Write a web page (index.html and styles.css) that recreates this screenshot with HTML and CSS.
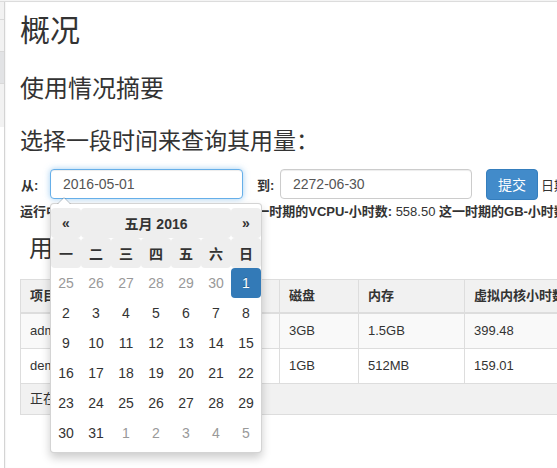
FILE: index.html
```html
<!DOCTYPE html>
<html lang="zh-CN">
<head>
<meta charset="utf-8">
<title>概况</title>
<link rel="stylesheet" href="styles.css">
</head>
<body>
<div class="topline"></div>
<div class="layout">
  <nav class="sidebar">
    <div class="side-item s1"></div>
    <div class="side-item s2"></div>
    <div class="side-item s3 active"></div>
    <div class="side-item s4"></div>
  </nav>
  <main class="main">
    <h1 class="page-title">概况</h1>
    <h3 class="summary-title">使用情况摘要</h3>
    <h3 class="select-title">选择一段时间来查询其用量：</h3>
    <form class="date-form">
      <label class="lbl lbl-from">从:</label>
      <input class="date-input focused" type="text" value="2016-05-01">
      <label class="lbl lbl-to">到:</label>
      <input class="date-input to-input" type="text" value="2272-06-30">
      <button class="btn-submit" type="button">提交</button>
      <span class="help">日期格式：YYYY-mm-dd</span>
    </form>
    <p class="usage-line"><strong>运行中的实例:</strong> 2 <strong>运行中的内存:</strong> 2.0GB <strong>这一时期的VCPU-小时数:</strong> 558.50 <strong>这一时期的GB-小时数:</strong> 1161.90</p>
    <div class="table-caption"><h3 class="table-title">用量</h3></div>
    <table class="usage-table">
      <colgroup>
        <col class="c1"><col class="c2"><col class="c3"><col class="c4"><col class="c5"><col class="c6">
      </colgroup>
      <thead>
        <tr><th>项目名称</th><th>VCPU数量</th><th>磁盘</th><th>内存</th><th>虚拟内核小时数</th><th>磁盘GB小时数</th></tr>
      </thead>
      <tbody>
        <tr class="odd"><td>admin</td><td>2</td><td>3GB</td><td>1.5GB</td><td>399.48</td><td>1198.44</td></tr>
        <tr><td>demo</td><td>1</td><td>1GB</td><td>512MB</td><td>159.01</td><td>159.01</td></tr>
      </tbody>
      <tfoot>
        <tr><td colspan="6">正在显示 2 项</td></tr>
      </tfoot>
    </table>

    <div class="datepicker">
      <table class="cal">
        <colgroup>
          <col class="cc"><col class="cc"><col class="cc"><col class="cc"><col class="cc"><col class="cc"><col class="cc">
        </colgroup>
        <thead>
          <tr><th class="nav">«</th><th class="switch" colspan="5">五月 2016</th><th class="nav">»</th></tr>
          <tr class="dow"><th>一</th><th>二</th><th>三</th><th>四</th><th>五</th><th>六</th><th>日</th></tr>
        </thead>
        <tbody>
          <tr><td class="old">25</td><td class="old">26</td><td class="old">27</td><td class="old">28</td><td class="old">29</td><td class="old">30</td><td class="active">1</td></tr>
          <tr><td>2</td><td>3</td><td>4</td><td>5</td><td>6</td><td>7</td><td>8</td></tr>
          <tr><td>9</td><td>10</td><td>11</td><td>12</td><td>13</td><td>14</td><td>15</td></tr>
          <tr><td>16</td><td>17</td><td>18</td><td>19</td><td>20</td><td>21</td><td>22</td></tr>
          <tr><td>23</td><td>24</td><td>25</td><td>26</td><td>27</td><td>28</td><td>29</td></tr>
          <tr><td>30</td><td>31</td><td class="new">1</td><td class="new">2</td><td class="new">3</td><td class="new">4</td><td class="new">5</td></tr>
        </tbody>
      </table>
    </div>
  </main>
</div>
</body>
</html>
```

FILE: styles.css
```css
html, body {
  margin: 0;
  padding: 0;
  overflow: hidden;
  background: #fff;
}
body {
  font-family: "Liberation Sans", "Noto Sans CJK SC", sans-serif;
  font-size: 13px;
  color: #333;
  width: 557px;
  height: 468px;
}
.topline {
  height: 1px;
  border-bottom: 1px solid #dcdcdc;
  background: #f4f4f4;
}
.layout {
  display: flex;
  align-items: stretch;
  height: 466px;
}
.sidebar {
  width: 4px;
  flex: none;
  align-self: flex-start;
  background: #f3f3f3;
}
.side-item {
  border-bottom: 1px solid #d9d9d9;
  background: #f2f2f2;
}
.s1 { height: 17px; }
.s2 { height: 31px; }
.s3 { height: 31px; }
.s4 { height: 43px; border-bottom: 0; }
.side-item.active { background: #e2e3e5; }
.main {
  position: relative;
  flex: 1;
  min-width: 0;
  border-left: 1px solid #d4d4d4;
  box-shadow: inset 1px 0 1px rgba(0,0,0,0.04);
  padding-left: 15px;
  overflow: hidden;
}
.page-title {
  margin: 12px 0 0;
  font-size: 30px;
  line-height: 33px;
  font-weight: 400;
  color: #333;
}
.summary-title {
  margin: 29px 0 0;
  font-size: 24px;
  line-height: 26px;
  font-weight: 400;
  color: #333;
}
.select-title {
  margin: 27px 0 0;
  font-size: 23px;
  line-height: 25px;
  font-weight: 400;
  color: #333;
}
.date-form {
  margin: 15px 0 0;
  display: flex;
  align-items: center;
  height: 30px;
  white-space: nowrap;
}
.lbl {
  font-weight: 700;
  font-size: 13px;
  flex: none;
}
.lbl-from { width: 30px; padding-left: 1px; box-sizing: border-box; }
.lbl-to { width: 23px; margin-left: 14px; }
.date-input {
  box-sizing: border-box;
  height: 30px;
  flex: none;
  border: 1px solid #ccc;
  border-radius: 4px;
  padding: 0 12px;
  font-family: "Liberation Sans", sans-serif;
  font-size: 14px;
  color: #555;
  background: #fff;
  box-shadow: inset 0 1px 1px rgba(0,0,0,0.075);
  outline: none;
}
.date-input.focused {
  width: 193px;
  border-color: #66afe9;
  box-shadow: inset 0 1px 1px rgba(0,0,0,0.075), 0 0 6px rgba(102,175,233,0.6);
}
.to-input { width: 192px; }
.btn-submit {
  flex: none;
  margin-left: 14px;
  width: 52px;
  height: 31px;
  border: 1px solid #357ebd;
  border-radius: 4px;
  background: #428bca;
  color: #fff;
  font-family: "Liberation Sans", "Noto Sans CJK SC", sans-serif;
  font-size: 14px;
  padding: 0;
}
.help {
  margin-left: 3px;
  font-size: 13px;
  color: #333;
}
.usage-line {
  margin: 4px 0 0;
  font-size: 13px;
  line-height: 18px;
  white-space: nowrap;
}
.usage-line strong { font-weight: 700; }
.table-caption {
  padding-left: 9px;
  margin-top: 15px;
}
.table-title {
  margin: 0;
  font-size: 24px;
  line-height: 26px;
  font-weight: 400;
  color: #333;
}
.usage-table {
  margin-top: 17px;
  border-collapse: collapse;
  table-layout: fixed;
  width: 750px;
  font-size: 13px;
  line-height: 18px;
}
.c1 { width: 130px; }
.c2 { width: 129px; }
.c3 { width: 79px; }
.c4 { width: 106px; }
.c5 { width: 150px; }
.c6 { width: 156px; }
.usage-table th, .usage-table td {
  border: 1px solid #ddd;
  text-align: left;
  padding: 8px 8px 8px 9px;
  white-space: nowrap;
  overflow: hidden;
}
.usage-table thead th {
  background: #f1f1f1;
  font-weight: 700;
  padding-top: 7px;
  padding-bottom: 7px;
  border-bottom: 2px solid #ddd;
}
.usage-table tr.odd td { background: #f9f9f9; }
.usage-table tfoot td {
  background: #f1f1f1;
  padding-top: 6px;
  padding-bottom: 6px;
}

/* datepicker dropdown */
.datepicker {
  position: absolute;
  left: 45px;
  top: 201px;
  z-index: 10;
  background: #fff;
  border: 1px solid rgba(0,0,0,0.17);
  border-radius: 4px;
  padding: 4px 0;
  box-shadow: 0 5px 10px rgba(0,0,0,0.2);
  font-family: "Liberation Sans", "Noto Sans CJK SC", sans-serif;
  font-size: 14px;
}
.datepicker::before {
  content: "";
  position: absolute;
  top: -7px;
  left: 6px;
  border-left: 7px solid transparent;
  border-right: 7px solid transparent;
  border-bottom: 7px solid rgba(0,0,0,0.2);
}
.datepicker::after {
  content: "";
  position: absolute;
  top: -6px;
  left: 7px;
  border-left: 6px solid transparent;
  border-right: 6px solid transparent;
  border-bottom: 6px solid #fff;
}
.cal {
  border-collapse: separate;
  border-spacing: 0;
  width: 210px;
  table-layout: fixed;
}
.cc { width: 30px; }
.cal th, .cal td {
  height: 30px;
  padding: 0;
  text-align: center;
  border-radius: 4px;
}
.cal th {
  background: #eee;
  font-weight: 700;
  color: #333;
}
.cal td { color: #333; }
.cal td.old, .cal td.new { color: #999; }
.cal td.active {
  background: #337ab7;
  color: #fff;
  text-shadow: 0 -1px 0 rgba(0,0,0,0.25);
}
```
